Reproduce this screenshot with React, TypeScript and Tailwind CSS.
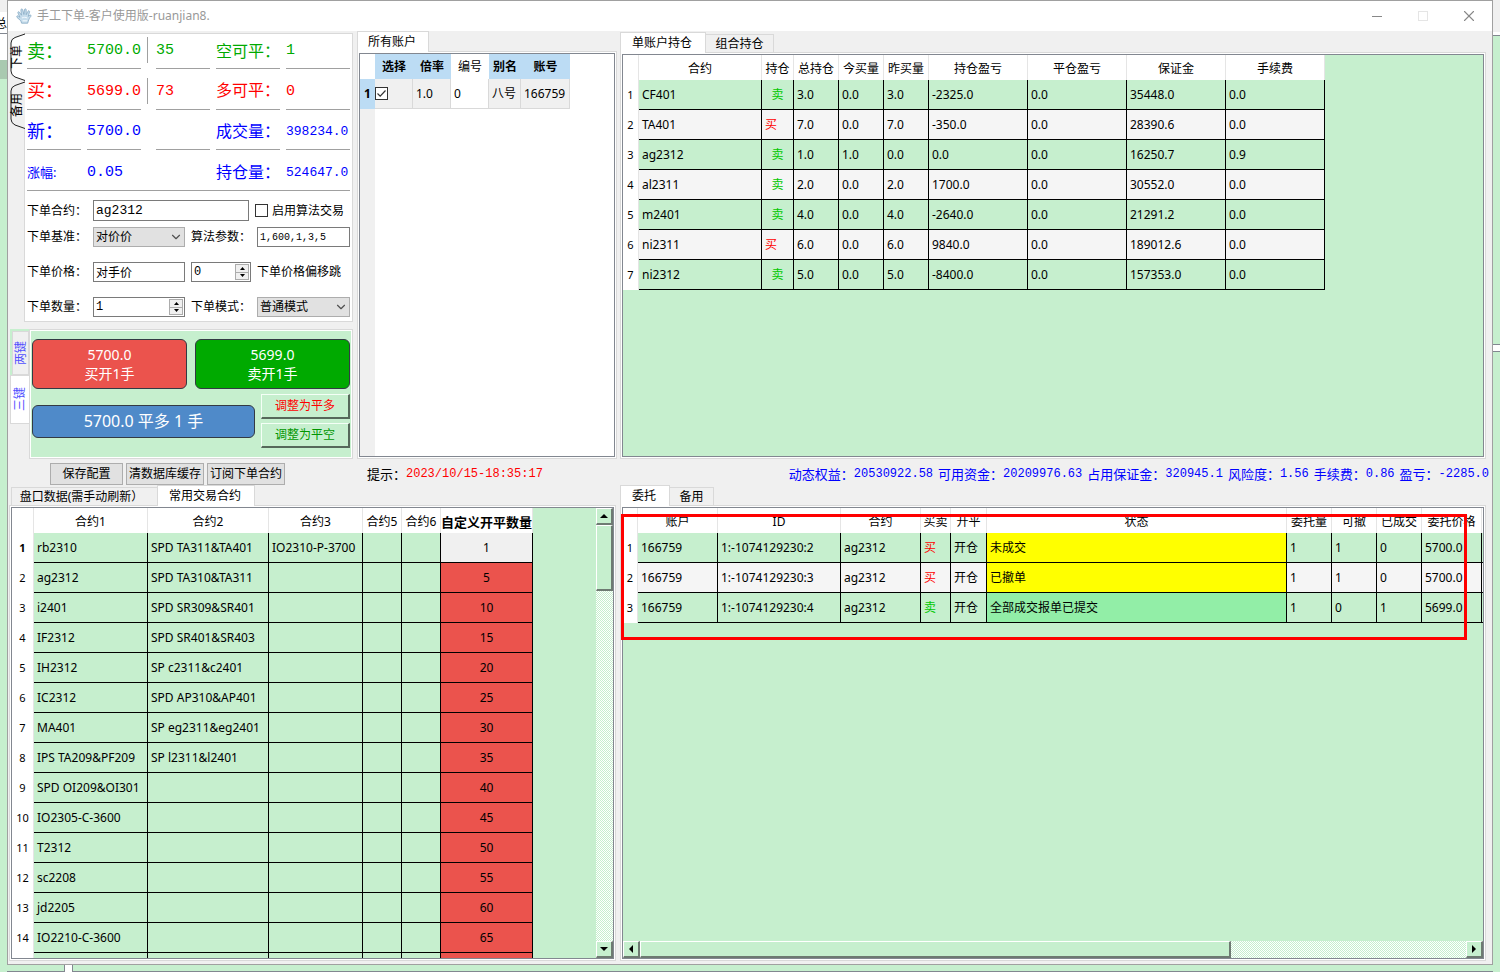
import { ReactNode } from "react";
import clsx from "clsx";
import { ChevronDown, X } from "lucide-react";

type Column = { title: string; width: string; bold?: boolean };

const accountColumns = [
  { title: "选择", width: "w-[38px]" },
  { title: "倍率", width: "w-[38px]" },
  { title: "编号", width: "w-[38px]" },
  { title: "别名", width: "w-[32px]" },
  { title: "账号", width: "w-[49px]" },
];

const positionColumns: Column[] = [
  { title: "合约", width: "w-[123px]" },
  { title: "持仓", width: "w-[32px]" },
  { title: "总持仓", width: "w-[45px]" },
  { title: "今买量", width: "w-[45px]" },
  { title: "昨买量", width: "w-[45px]" },
  { title: "持仓盈亏", width: "w-[99px]" },
  { title: "平仓盈亏", width: "w-[99px]" },
  { title: "保证金", width: "w-[99px]" },
  { title: "手续费", width: "w-[99px]" },
];

const positions = [
  ["CF401", "卖", "3.0", "0.0", "3.0", "-2325.0", "0.0", "35448.0", "0.0"],
  ["TA401", "买", "7.0", "0.0", "7.0", "-350.0", "0.0", "28390.6", "0.0"],
  ["ag2312", "卖", "1.0", "1.0", "0.0", "0.0", "0.0", "16250.7", "0.9"],
  ["al2311", "卖", "2.0", "0.0", "2.0", "1700.0", "0.0", "30552.0", "0.0"],
  ["m2401", "卖", "4.0", "0.0", "4.0", "-2640.0", "0.0", "21291.2", "0.0"],
  ["ni2311", "买", "6.0", "0.0", "6.0", "9840.0", "0.0", "189012.6", "0.0"],
  ["ni2312", "卖", "5.0", "0.0", "5.0", "-8400.0", "0.0", "157353.0", "0.0"],
];

const contractColumns: Column[] = [
  { title: "合约1", width: "w-[114px]" },
  { title: "合约2", width: "w-[121px]" },
  { title: "合约3", width: "w-[94px]" },
  { title: "合约5", width: "w-[39px]" },
  { title: "合约6", width: "w-[39px]" },
  { title: "自定义开平数量", width: "w-[92px]", bold: true },
];

const contracts = [
  ["rb2310", "SPD TA311&TA401", "IO2310-P-3700", "", "", "1"],
  ["ag2312", "SPD TA310&TA311", "", "", "", "5"],
  ["i2401", "SPD SR309&SR401", "", "", "", "10"],
  ["IF2312", "SPD SR401&SR403", "", "", "", "15"],
  ["IH2312", "SP c2311&c2401", "", "", "", "20"],
  ["IC2312", "SPD AP310&AP401", "", "", "", "25"],
  ["MA401", "SP eg2311&eg2401", "", "", "", "30"],
  ["IPS TA209&PF209", "SP l2311&l2401", "", "", "", "35"],
  ["SPD OI209&OI301", "", "", "", "", "40"],
  ["IO2305-C-3600", "", "", "", "", "45"],
  ["T2312", "", "", "", "", "50"],
  ["sc2208", "", "", "", "", "55"],
  ["jd2205", "", "", "", "", "60"],
  ["IO2210-C-3600", "", "", "", "", "65"],
  ["", "", "", "", "", ""],
];

const orderColumns: Column[] = [
  { title: "账户", width: "w-[80px]" },
  { title: "ID", width: "w-[123px]" },
  { title: "合约", width: "w-[80px]" },
  { title: "买卖", width: "w-[30px]" },
  { title: "开平", width: "w-[36px]" },
  { title: "状态", width: "w-[300px]" },
  { title: "委托量", width: "w-[45px]" },
  { title: "可撤", width: "w-[45px]" },
  { title: "已成交", width: "w-[45px]" },
  { title: "委托价格", width: "w-[60px]" },
  { title: "", width: "w-[60px]" },
];

const orders = [
  ["166759", "1:-1074129230:2", "ag2312", "买", "开仓", "未成交", "1", "1", "0", "5700.0", ""],
  ["166759", "1:-1074129230:3", "ag2312", "买", "开仓", "已撤单", "1", "1", "0", "5700.0", ""],
  ["166759", "1:-1074129230:4", "ag2312", "卖", "开仓", "全部成交报单已提交", "1", "0", "1", "5699.0", ""],
];

const summary = [
  ["动态权益：", "20530922.58"],
  ["可用资金：", "20209976.63"],
  ["占用保证金：", "320945.1"],
  ["风险度：", "1.56"],
  ["手续费：", "0.86"],
  ["盈亏：", "-2285.0"],
];

function HandIcon() {
  return (
    <svg width="16" height="16" viewBox="0 0 16 16" aria-hidden="true">
      <path
        d="M5.6 15.2 4.8 12.8 1 9.400C.2 8.500 1.200 7.400 2.200 8L4 9.300 1.900 4.900C1.500 3.800 2.900 3.300 3.400 4.200L5.500 7.200 4.900 2C4.800.8 6.400.6 6.700 1.700L7.900 6.500 8.500 1.600C8.700.5 10.200.6 10.200 1.800L10.200 6.700 12 3.200C12.600 2.300 13.800 2.900 13.500 3.900L12.300 8.300 13.900 7.200C14.700 6.700 15.500 7.600 14.900 8.300 13.400 10 13.100 11.200 12.300 13L11.700 15.200z"
        fill="#c6ddec"
        stroke="#86a9c4"
        strokeWidth="0.8"
        strokeLinejoin="round"
      />
      <path d="M6 10c1.700-.9 3.700-.9 5.200 0M6.600 12.800h4.600" stroke="#f4faff" strokeWidth="1" fill="none" />
    </svg>
  );
}

function Tab({ active, className, children }: { active?: boolean; className: string; children: ReactNode }) {
  return (
    <button
      type="button"
      role="tab"
      aria-selected={!!active}
      className={clsx(
        "shrink-0 whitespace-nowrap border border-[#d9d9d9] border-b-0 text-center",
        active ? "relative z-10 -mb-px h-[21px] bg-white pr-[2px] pb-px" : "h-[18px] border-l-0 bg-[#f0f0f0]",
        className
      )}
    >
      {children}
    </button>
  );
}

function Pane({ className, children }: { className?: string; children: ReactNode }) {
  return (
    <div className="flex min-h-0 flex-1 border border-[#d9d9d9] bg-white p-px">
      <div className={clsx("flex min-h-0 min-w-0 flex-1 overflow-hidden border border-[#828790]", className)}>
        {children}
      </div>
    </div>
  );
}

function Grid({
  columns,
  rows,
  label,
  headWidth,
  currentRow,
  cellClass,
}: {
  columns: Column[];
  rows: string[][];
  label: string;
  headWidth: string;
  currentRow?: number;
  cellClass: (row: number, col: number, value: string) => string;
}) {
  return (
    <table aria-label={label} className="w-0 shrink-0 table-fixed border-separate border-spacing-0 whitespace-nowrap">
      <thead>
        <tr className="h-[25px] bg-white">
          <th className={clsx("border-r border-[#e5e5e5]", headWidth)} />
          {columns.map((c, i) => (
            <th
              key={i}
              className={clsx(
                "overflow-hidden border-r border-[#e5e5e5] p-0 pt-[3px]",
                c.width,
                c.bold ? "text-[13px] font-bold" : "font-normal"
              )}
            >
              <span className="flex justify-center">{c.title}</span>
            </th>
          ))}
        </tr>
      </thead>
      <tbody>
        {rows.map((row, r) => (
          <tr key={r} className="h-[30px]">
            <th
              scope="row"
              className={clsx(
                "border-r border-[#e5e5e5] bg-white p-0 text-center text-[11px]",
                r === currentRow ? "font-bold" : "font-normal"
              )}
            >
              {r + 1}
            </th>
            {row.map((value, c) => (
              <td key={c} className={clsx("overflow-hidden border-r border-b border-black p-0 px-[3px]", cellClass(r, c, value))}>
                {value}
              </td>
            ))}
          </tr>
        ))}
      </tbody>
    </table>
  );
}

const sideColor = (value: string) => (value === "买" ? "text-[#ff0000]" : "text-[#00c800]");

const stripe = (row: number) => (row % 2 ? "bg-[#f5f5f5]" : "bg-[#c6efce]");

function positionCell(row: number, col: number, value: string) {
  if (col !== 1) return stripe(row);
  return clsx(stripe(row), sideColor(value), value === "卖" && "text-center");
}

function contractCell(row: number, col: number) {
  if (col < 5) return "bg-[#c6efce]";
  return row === 0 ? "bg-[#f0f0f0] text-center" : "bg-[#eb534d] text-center";
}

function orderCell(row: number, col: number, value: string) {
  if (col === 3) return clsx(stripe(row), sideColor(value));
  if (col === 5) return row < 2 ? "bg-[#ffff00]" : "bg-[#92eea7]";
  return stripe(row);
}

function ScrollButton({ label, arrow }: { label: string; arrow: string }) {
  return (
    <button
      type="button"
      aria-label={label}
      className="flex size-[17px] shrink-0 items-center justify-center border border-r-2 border-b-2 border-white border-r-[#6e7a72] border-b-[#6e7a72] bg-[#c6efce]"
    >
      <svg width="8" height="8" viewBox="0 0 8 8" aria-hidden="true">
        <path d={arrow} fill="#000" />
      </svg>
    </button>
  );
}

function Value({ small, children }: { small?: boolean; children?: ReactNode }) {
  return (
    <div
      className={clsx(
        "flex h-full items-center border-b border-[#a0a0a0] pt-[5px] font-['Liberation_Mono','Noto_Sans_CJK_SC',monospace]",
        small ? "text-[13px]" : "text-[15px]"
      )}
    >
      {children}
    </div>
  );
}

function Label({ className, children }: { className?: string; children?: ReactNode }) {
  return <div className={clsx("flex h-full items-center whitespace-nowrap border-b border-[#a0a0a0] pt-[2px]", className)}>{children}</div>;
}

function Divider() {
  return <div className="mb-[6px] h-[26px] w-px self-end bg-[#a0a0a0]" />;
}

const quoteRow = "grid grid-cols-[54px_54px_3px_54px_64px_64px] gap-x-[6px] items-center";

function Quotes() {
  return (
    <div className="px-[2px]">
      {/* the first row is shorter, so its text sits a little higher */}
      <div className={clsx(quoteRow, "h-[35px] text-[#00aa00] *:pt-0")}>
        <Label className="text-[18px]">卖：</Label>
        <Value>5700.0</Value>
        <Divider />
        <Value>35</Value>
        <Label className="text-[16px]">空可平：</Label>
        <Value>1</Value>
      </div>
      <div className={clsx(quoteRow, "h-[41px] text-[#ff0000]")}>
        <Label className="text-[18px]">买：</Label>
        <Value>5699.0</Value>
        <Divider />
        <Value>73</Value>
        <Label className="text-[16px]">多可平：</Label>
        <Value>0</Value>
      </div>
      <div className={clsx(quoteRow, "h-[40px] text-[#0000ff]")}>
        <Label className="text-[18px]">新：</Label>
        <Value>5700.0</Value>
        <div />
        <Value />
        <Label className="text-[16px]">成交量：</Label>
        <Value small>398234.0</Value>
      </div>
      <div className="grid h-[41px] grid-cols-[54px_123px_64px_64px] items-center gap-x-[6px] border-b border-[#a0a0a0] pt-[3px] text-[#0000ff]">
        <span className="text-[13px]">涨幅:</span>
        <span className="pt-[2px] font-['Liberation_Mono',monospace] text-[15px]">0.05</span>
        <span className="whitespace-nowrap text-[16px]">持仓量：</span>
        <span className="pt-[2px] font-['Liberation_Mono',monospace] text-[13px]">524647.0</span>
      </div>
    </div>
  );
}

function Select({ id, value }: { id: string; value: string }) {
  return (
    <div className="relative h-[20px] w-full">
      <select id={id} className="block h-full w-full appearance-none border border-[#adadad] bg-[#e1e1e1] pl-[2px] text-[12px] leading-[16px]">
        <option>{value}</option>
      </select>
      <ChevronDown size={14} strokeWidth={2} color="#505050" className="pointer-events-none absolute top-[3px] right-[2px]" />
    </div>
  );
}

function SpinBox({ id, value }: { id: string; value: string }) {
  return (
    <div className="flex h-[20px] w-full border border-[#7a7a7a] bg-white p-px">
      <input id={id} defaultValue={value} className="min-w-0 flex-1 pl-px font-['Liberation_Mono',monospace] text-[12px] outline-none" />
      <div className="flex w-[14px] flex-col">
        <button type="button" aria-label="增加" className="flex flex-1 items-center justify-center border border-b-0 border-[#acacac] bg-[#f0f0f0]">
          <svg width="5" height="3" viewBox="0 0 5 3"><path d="M2.500 0 5 3H0z" /></svg>
        </button>
        <button type="button" aria-label="减少" className="flex flex-1 items-center justify-center border border-[#acacac] bg-[#f0f0f0]">
          <svg width="5" height="3" viewBox="0 0 5 3"><path d="M0 0h5L2.500 3z" /></svg>
        </button>
      </div>
    </div>
  );
}

const formRow = "grid grid-cols-[60px_92px_60px_93px] items-center gap-x-[6px] whitespace-nowrap";
const textBox = "h-[20px] w-full min-w-0 border border-[#7a7a7a] bg-white pl-[2px] outline-none";

function OrderForm() {
  return (
    <form className="flex flex-col gap-[15px] px-[2px] pt-[9px]">
      <div className="flex flex-col gap-[6px]">
        <div className="flex h-[21px] items-center gap-[6px] whitespace-nowrap">
          <label htmlFor="contract" className="w-[60px]">下单合约：</label>
          <input
            id="contract"
            defaultValue="ag2312"
            className="h-full w-[156px] border border-[#7a7a7a] bg-white pl-[2px] font-['Liberation_Mono',monospace] text-[13px] outline-none"
          />
          <label className="flex items-center gap-1">
            <input type="checkbox" className="size-[13px] appearance-none border border-[#333333] bg-white" />
            启用算法交易
          </label>
        </div>
        <div className={formRow}>
          <label htmlFor="basis">下单基准：</label>
          <Select id="basis" value="对价价" />
          <label htmlFor="params">算法参数：</label>
          <input id="params" defaultValue="1,600,1,3,5" className={clsx(textBox, "font-['Liberation_Mono',monospace] text-[10px]")} />
        </div>
      </div>
      <div className={formRow}>
        <label htmlFor="price">下单价格：</label>
        <input id="price" defaultValue="对手价" className={textBox} />
        <SpinBox id="offset" value="0" />
        <label htmlFor="offset">下单价格偏移跳</label>
      </div>
      <div className={formRow}>
        <label htmlFor="amount">下单数量：</label>
        <SpinBox id="amount" value="1" />
        <label htmlFor="mode">下单模式：</label>
        <Select id="mode" value="普通模式" />
      </div>
    </form>
  );
}

function SideTab({ active, children }: { active?: boolean; children: ReactNode }) {
  return (
    <button type="button" role="tab" aria-selected={!!active} className="relative h-[48px] w-full">
      <svg className="absolute inset-0" width="15" height="48" viewBox="0 0 15 48" fill="none" aria-hidden="true">
        <path d="M15 1 5 4.500Q1 6 1 10v28q0 4 4 6l10 3.500" fill={active ? "#fff" : "#f0f0f0"} stroke="#222" />
      </svg>
      <span className="relative flex h-full w-full rotate-180 items-center justify-center [text-orientation:sideways] [writing-mode:vertical-rl]">
        {children}
      </span>
    </button>
  );
}

const sideways = "flex rotate-180 items-center justify-center text-[#5050ff] [text-orientation:sideways] [writing-mode:vertical-rl]";
const bevel = "h-[25px] border border-r-2 border-b-2 border-[#f4fff6] border-r-[#56685a] border-b-[#56685a] bg-[#c6efce]";

function TradeKeys() {
  return (
    <div className="flex h-[130px]">
      <div className="flex w-[19px] flex-col bg-[#f0f0f0]" role="tablist">
        <div className="bg-[#c6efce] pt-[2px] pl-[2px]">
          <button type="button" role="tab" aria-selected="false" className="flex h-[44px] w-full items-center justify-center border border-[#d9d9d9] bg-[#f0f0f0]">
            <span className={sideways}>两键</span>
          </button>
        </div>
        <button type="button" role="tab" aria-selected="true" className="flex h-[49px] items-center justify-center border border-r-0 border-[#d9d9d9] bg-white">
          <span className={sideways}>三键</span>
        </button>
      </div>
      <div className="flex-1 border border-[#d9d9d9] bg-white p-px">
        <div className="flex h-full flex-col gap-[5px] bg-[#c6efce] px-px pt-[8px]">
          <div className="grid grid-cols-2 gap-[8px] text-[14px] leading-[19px] text-white">
            <button type="button" className="h-[50px] rounded-[6px] border border-[#333a44] bg-[#eb534d]">
              5700.0<br />买开1手
            </button>
            <button type="button" className="h-[50px] rounded-[6px] border border-[#333a44] bg-[#00aa00]">
              5699.0<br />卖开1手
            </button>
          </div>
          <div className="flex items-center gap-[6px]">
            <button type="button" className="h-[33px] flex-1 rounded-[6px] border border-[#333a44] bg-[#4f8ac9] text-[16px] text-white">
              5700.0 平多 1 手
            </button>
            <div className="flex w-[89px] flex-col gap-1">
              <button type="button" className={clsx(bevel, "text-[#ff0000]")}>调整为平多</button>
              <button type="button" className={clsx(bevel, "text-[#009600]")}>调整为平空</button>
            </div>
          </div>
        </div>
      </div>
    </div>
  );
}

function Accounts() {
  const cell = "border-r border-b border-[#d9d9d9] p-0 px-[3px] text-left font-normal";
  return (
    <div className="flex w-[260px] shrink-0 flex-col">
      <div role="tablist" className="flex items-end">
        <Tab active className="w-[72px]">所有账户</Tab>
      </div>
      <Pane className="items-start bg-[linear-gradient(90deg,#f0f0f0_15px,#ffffff_15px)]">
        <table aria-label="所有账户" className="w-0 table-fixed border-separate border-spacing-0 whitespace-nowrap">
          <thead>
            <tr className="h-[25px]">
              <th className="w-[15px] bg-white p-0" />
              {accountColumns.map((c) => (
                <th key={c.title} className={clsx("p-0", c.width, c.title === "编号" ? "bg-white font-normal" : "bg-[#bcdcf4] font-bold")}>
                  {c.title}
                </th>
              ))}
            </tr>
          </thead>
          <tbody>
            <tr className="h-[30px] bg-[#f0f0f0]">
              <th scope="row" className="bg-[#bcdcf4] p-0 font-bold">1</th>
              <td className="border-r border-b border-[#d9d9d9] p-0">
                <label className="relative block size-[13px]">
                  <input type="checkbox" defaultChecked aria-label="选择账户" className="block size-[13px] appearance-none border border-[#333333] bg-white" />
                  <svg className="absolute inset-0" width="13" height="13" viewBox="0 0 13 13" aria-hidden="true">
                    <path d="M2.500 6.500 5.200 9.200 10.500 3.500" fill="none" stroke="#333" strokeWidth="1.200" />
                  </svg>
                </label>
              </td>
              <td className={cell}>1.0</td>
              <td className={clsx(cell, "bg-white")}>0</td>
              <td className={cell}>八号</td>
              <td className={cell}>166759</td>
            </tr>
          </tbody>
        </table>
      </Pane>
    </div>
  );
}

const toolButton = "h-[22px] border border-[#adadad] bg-[#e1e1e1] whitespace-nowrap";

export default function App() {
  return (
    <div className="flex h-screen overflow-hidden bg-[#c6efce] font-['Noto_Sans','Noto_Sans_CJK_SC',sans-serif] text-[12px] leading-[16px] text-black">
      {/* slice of the window behind */}
      <div className="flex w-[7px] shrink-0 flex-col overflow-hidden">
        <div className="h-[12px] bg-[#f0f0f0]" />
        <div className="flex h-[22px] justify-end border-b border-[#828790] bg-white pt-1">总</div>
        <div className="h-[26px] bg-white" />
        <div className="h-[19px] bg-[#a9c9b0]" />
      </div>

      <div className="flex min-w-0 flex-1 flex-col">
        <main className="flex min-h-0 flex-1 flex-col border border-[#a0a0a0] bg-[#f0f0f0]">
          <header className="flex h-[30px] shrink-0 items-center bg-white pl-2 text-[#999999]">
            <HandIcon />
            <h1 className="flex-1 pl-[5px]">手工下单-客户使用版-ruanjian8.</h1>
            <div className="flex items-center">
              <button type="button" aria-label="最小化" className="flex h-[30px] w-[46px] items-center justify-center">
                <span className="h-px w-[10px] bg-[#888888]" />
              </button>
              <button type="button" aria-label="最大化" className="flex h-[30px] w-[46px] items-center justify-center">
                <span className="size-[10px] border border-[#e5e5e5]" />
              </button>
              <button type="button" aria-label="关闭" className="flex h-[30px] w-[46px] items-center justify-center">
                <X size={18} strokeWidth={1.5} color="#888888" />
              </button>
            </div>
          </header>

          <section className="flex h-[428px] shrink-0 pr-[6px] pl-[2px]">
            <div className="flex w-[343px] shrink-0 flex-col justify-between pt-[2px]">
              <div className="flex">
                <div role="tablist" className="flex w-[14px] shrink-0 flex-col">
                  <SideTab active>下单</SideTab>
                  <SideTab>备用</SideTab>
                </div>
                <div className="h-[289px] flex-1 border border-[#d9d9d9] bg-white">
                  <Quotes />
                  <OrderForm />
                </div>
              </div>
              <TradeKeys />
            </div>
            <div className="w-[4px] shrink-0" />
            <Accounts />
            <div className="w-[3px] shrink-0" />
            <div className="flex min-w-0 flex-1 flex-col pt-px">
              <div role="tablist" className="flex items-end">
                <Tab active className="w-[86px]">单账户持仓</Tab>
                <Tab className="w-[68px]">组合持仓</Tab>
              </div>
              <Pane className="items-start bg-[#c6efce]">
                <Grid columns={positionColumns} rows={positions} label="单账户持仓" headWidth="w-[16px]" cellClass={positionCell} />
              </Pane>
            </div>
          </section>

          <section className="flex h-[26px] shrink-0 items-center whitespace-nowrap pt-[3px] pr-[3px] pl-[42px]">
            <div className="flex gap-[3px]">
              <button type="button" className={clsx(toolButton, "w-[73px]")}>保存配置</button>
              <button type="button" className={clsx(toolButton, "w-[78px]")}>清数据库缓存</button>
              <button type="button" className={clsx(toolButton, "w-[78px]")}>订阅下单合约</button>
            </div>
            <p className="flex flex-1 items-center pl-[82px] text-[13px]">
              提示：
              <span className="font-['Liberation_Mono',monospace] text-[12px] text-[#ff0000]">2023/10/15-18:35:17</span>
            </p>
            <dl className="flex gap-[5px] text-[13px] text-[#0000ff]">
              {summary.map(([name, value]) => (
                <div key={name} className="flex items-center">
                  <dt>{name}</dt>
                  <dd className="font-['Liberation_Mono',monospace] text-[12px]">{value}</dd>
                </div>
              ))}
            </dl>
          </section>

          <section className="flex min-h-0 flex-1 gap-[4px] pr-[6px] pb-[3px] pl-px">
            <div className="flex w-[607px] shrink-0 flex-col">
              <div role="tablist" className="flex items-end">
                <button type="button" role="tab" aria-selected="false" className="ml-[2px] h-[18px] w-[146px] border border-r-0 border-b-0 border-[#d9d9d9] pr-[6px]">
                  盘口数据(需手动刷新）
                </button>
                <Tab active className="w-[98px]">常用交易合约</Tab>
              </div>
              <Pane className="justify-between bg-[#c6efce]">
                <Grid columns={contractColumns} rows={contracts} label="常用交易合约" headWidth="w-[22px]" currentRow={0} cellClass={contractCell} />
                <div className="flex w-[17px] flex-col bg-[conic-gradient(#fff_25%,#c6efce_0_50%,#fff_0_75%,#c6efce_0)] bg-[length:2px_2px]">
                  <ScrollButton label="向上" arrow="M4 2 8 6H0z" />
                  <div className="h-[66px] border border-r-2 border-b-2 border-white border-r-[#6e7a72] border-b-[#6e7a72] bg-[#c6efce]" />
                  <div className="flex-1" />
                  <ScrollButton label="向下" arrow="M0 2h8L4 6z" />
                </div>
              </Pane>
            </div>

            <div className="relative flex min-w-0 flex-1 flex-col">
              <div role="tablist" className="flex items-end">
                <Tab active className="w-[50px]">委托</Tab>
                <Tab className="w-[44px]">备用</Tab>
              </div>
              <Pane className="flex-col bg-[#c6efce]">
                <div className="min-h-0 flex-1 overflow-hidden">
                  <Grid columns={orderColumns} rows={orders} label="委托" headWidth="w-[15px]" cellClass={orderCell} />
                </div>
                <div className="flex h-[17px] shrink-0 bg-[conic-gradient(#fff_25%,#c6efce_0_50%,#fff_0_75%,#c6efce_0)] bg-[length:2px_2px]">
                  <ScrollButton label="向左" arrow="M2 4 6 0v8z" />
                  <div className="flex-5 border border-r-2 border-b-2 border-white border-r-[#6e7a72] border-b-[#6e7a72] bg-[#c6efce]" />
                  <div className="flex-2" />
                  <ScrollButton label="向右" arrow="M2 0 6 4 2 8z" />
                </div>
              </Pane>
              {/* highlight round the order rows */}
              <div className="pointer-events-none absolute top-[29px] right-[19px] left-px z-20 h-[126px] border-[3px] border-[#ff0000]" />
            </div>
          </section>
        </main>
        <div className="flex h-[7px] shrink-0">
          <div className="w-[58px] border-r border-b border-[#828790]" />
          <div className="w-[7px] bg-white" />
          <div className="flex-1 border-b border-l border-[#828790]" />
        </div>
      </div>

      <div className="flex w-[7px] shrink-0 flex-col">
        <div className="h-[32px] bg-[#f0f0f0]" />
        <div className="h-[4px] border-b border-[#828790] bg-white" />
        <div className="h-[308px]" />
        <div className="h-[8px] border-y border-[#828790] bg-white" />
      </div>
    </div>
  );
}
